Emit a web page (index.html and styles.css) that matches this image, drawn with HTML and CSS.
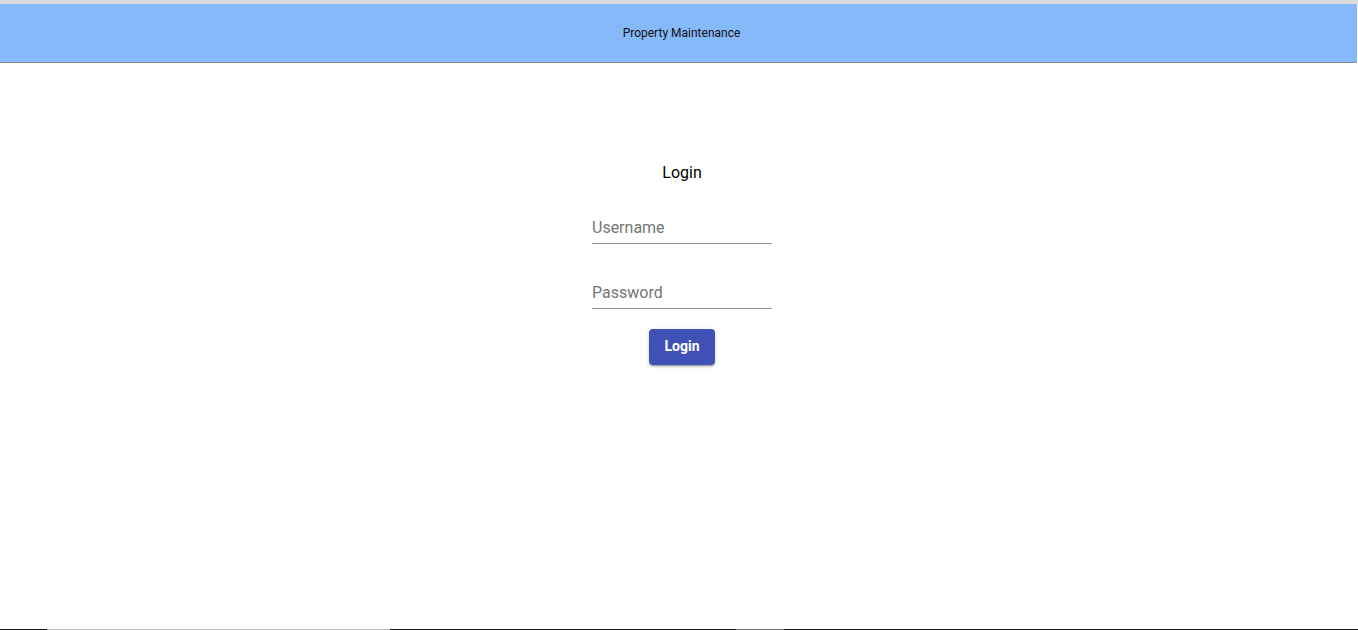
FILE: index.html
```html
<!DOCTYPE html>
<html lang="en">
<head>
<meta charset="utf-8">
<title>Property Maintenance</title>
<link rel="stylesheet" href="styles.css">
</head>
<body>
<div class="page">
  <div class="top-strip"></div>
  <header class="toolbar">Property Maintenance</header>
  <main class="login">
    <h2 class="login-title">Login</h2>
    <form class="login-form">
      <label class="field"><input class="field-input" type="text" placeholder="Username"></label>
      <label class="field"><input class="field-input" type="password" placeholder="Password"></label>
      <button class="login-btn" type="button">Login</button>
    </form>
  </main>
  <div class="bottom-strip">
    <span class="seg dark s1"></span>
    <span class="seg light s2"></span>
    <span class="seg dark s3"></span>
    <span class="seg mid s4"></span>
    <span class="seg dark s5"></span>
  </div>
</div>
</body>
</html>
```

FILE: styles.css
```css
html, body {
  margin: 0;
  padding: 0;
  background: #ffffff;
  font-family: Roboto, "Liberation Sans", Arial, sans-serif;
}

.page {
  display: flex;
  flex-direction: column;
  min-height: 100vh;
}

.top-strip {
  height: 4px;
  background: #dcdcdc;
}

.toolbar {
  height: 58px;
  background: #86b9f9;
  border-bottom: 1px solid #8a8a8a;
  display: flex;
  align-items: center;
  justify-content: center;
  font-size: 12px;
  color: #111;
  margin-right: 1px;
  padding-left: 6px;
}

.login {
  display: flex;
  flex-direction: column;
  align-items: center;
  padding-top: 100px;
  padding-left: 6px;
}

.login-title {
  margin: 0;
  font-size: 16px;
  line-height: 19px;
  font-weight: 400;
  color: #000;
}

.login-form {
  display: flex;
  flex-direction: column;
  align-items: center;
  margin-top: 36px;
}

.field {
  display: block;
  width: 180px;
  border-bottom: 1px solid #949494;
  padding-bottom: 6px;
}

.field + .field {
  margin-top: 39px;
}

.field-input {
  display: block;
  width: 100%;
  box-sizing: border-box;
  border: none;
  outline: none;
  padding: 0;
  margin: 0;
  font-family: inherit;
  font-size: 16px;
  line-height: 19px;
  height: 19px;
  color: #222;
  background: transparent;
}

.field-input::placeholder {
  color: #757575;
}

.login-btn {
  margin-top: 20px;
  height: 36px;
  width: 66px;
  padding: 0 0 2px;
  border: none;
  border-radius: 4px;
  background: #3f51b5;
  color: #fff;
  font-family: inherit;
  font-size: 14px;
  font-weight: 700;
  box-shadow: 0 3px 1px -2px rgba(0,0,0,.2), 0 2px 2px 0 rgba(0,0,0,.14), 0 1px 5px 0 rgba(0,0,0,.12);
  cursor: pointer;
}

.bottom-strip {
  margin-top: auto;
  height: 1px;
  display: flex;
}

.seg { display: block; height: 1px; }
.dark { background: #1e1a1a; }
.light { background: #bdbdbd; }
.mid { background: #6b6b6b; }
.s1 { width: 47px; }
.s2 { width: 343px; }
.s3 { width: 346px; }
.s4 { width: 48px; }
.s5 { flex: 1; }
```
